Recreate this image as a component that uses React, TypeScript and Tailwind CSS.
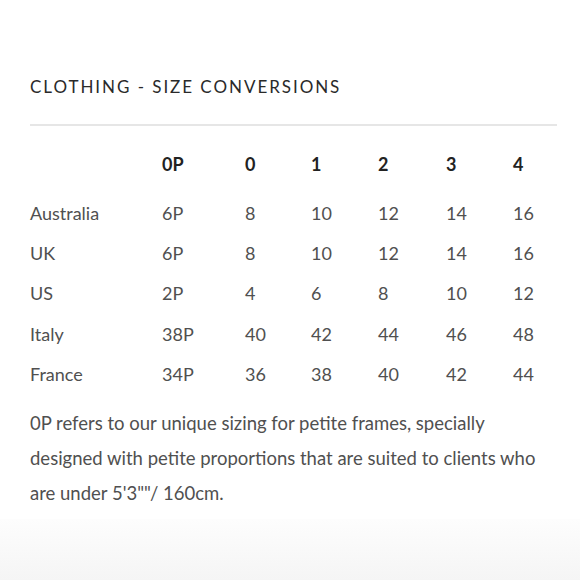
export default function App() {
  const headers = ["0P", "0", "1", "2", "3", "4"]
  const rows = [
    ["Australia", "6P", "8", "10", "12", "14", "16"],
    ["UK", "6P", "8", "10", "12", "14", "16"],
    ["US", "2P", "4", "6", "8", "10", "12"],
    ["Italy", "38P", "40", "42", "44", "46", "48"],
    ["France", "34P", "36", "38", "40", "42", "44"],
  ]
  const cols = "grid grid-cols-[132px_83px_66px_67px_68px_67px_1fr]"

  return (
    <div className="w-[580px] h-[580px] bg-white overflow-hidden flex flex-col font-['Lato',sans-serif] text-[#3a3a3a]">
      <div className="px-[30px] pt-[76px]">
        <h1 className="text-[17px] leading-[22px] tracking-[1.95px] text-[#2a2a2a]">CLOTHING - SIZE CONVERSIONS</h1>
        <div className="mt-[26px] h-[2px] bg-[#e6e6e6] mr-[-7px]" />

        {/* size table */}
        <div className={`${cols} mt-[25px] h-[24px] items-center text-[18px] font-bold text-[#222]`}>
          <div />
          {headers.map((h) => (
            <div key={h}>{h}</div>
          ))}
        </div>
        <div className="mt-[18px] flex flex-col">
          {rows.map((r) => (
            <div key={r[0]} className={`${cols} h-[40.3px] items-center text-[18px] text-[#505050]`}>
              {r.map((c, i) => (
                <div key={i}>{c}</div>
              ))}
            </div>
          ))}
        </div>

        <p className="mt-[12px] max-w-[515px] text-[18.5px] leading-[35px] text-[#505050]">
          0P refers to our unique sizing for petite frames, specially designed with petite proportions that are suited to clients who are under 5'3""/ 160cm.
        </p>
      </div>
      <div className="flex-1 mt-[8px] bg-gradient-to-b from-[#fdfdfd] to-[#f5f5f5]" />
    </div>
  )
}
